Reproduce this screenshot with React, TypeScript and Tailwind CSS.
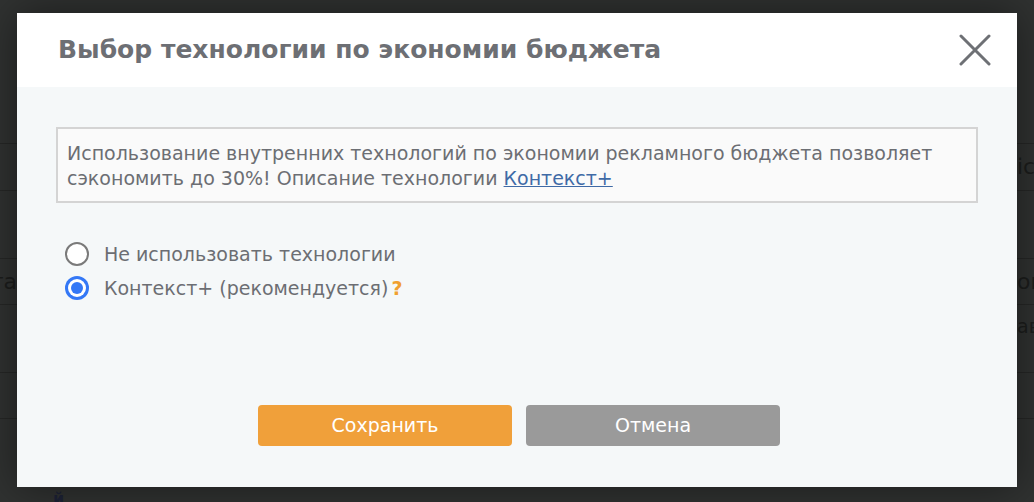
import React, { useState } from 'react';

const font = "font-['DejaVu_Sans',_'Liberation_Sans',_sans-serif]";

const BackgroundPage: React.FC = () => (
  <div className="flex h-full w-full flex-col bg-[#303231] text-[#1c1d1c]">
    <div className="h-[143px] shrink-0" />
    <div className="flex h-[47px] shrink-0 items-center justify-between border-t border-[#262726]">
      <div />
      <div className="w-[17px] overflow-hidden whitespace-nowrap text-[22px] leading-none">іс</div>
    </div>
    <div className="h-[68px] shrink-0 border-t border-[#262726]" />
    <div className="flex h-[46px] shrink-0 items-center justify-between border-t border-[#262726]">
      <div className="flex w-[17px] justify-end overflow-hidden whitespace-nowrap text-[22px] leading-none">та</div>
      <div className="w-[17px] overflow-hidden whitespace-nowrap text-[22px] leading-none">ой</div>
    </div>
    <div className="flex h-[68px] shrink-0 items-start justify-between border-t border-[#262726] pt-[12px]">
      <div />
      <div className="w-[17px] overflow-hidden whitespace-nowrap text-[19px] leading-none">ав</div>
    </div>
    <div className="h-[46px] shrink-0 border-t border-[#262726]" />
    <div className="flex-1 border-t border-[#262726] pl-[53px] pt-[72px] text-[16px] font-bold leading-none text-[#1d2236]">
      й
    </div>
  </div>
);

const Radio: React.FC<{ checked: boolean; onClick: () => void; children: React.ReactNode }> = ({
  checked,
  onClick,
  children,
}) => (
  <label className="flex cursor-pointer items-center gap-[15px]" onClick={onClick}>
    {checked ? (
      <span className="flex h-[24px] w-[24px] items-center justify-center rounded-full bg-[#3478f6]">
        <span className="flex h-[18px] w-[18px] items-center justify-center rounded-full bg-white">
          <span className="h-[12px] w-[12px] rounded-full bg-[#3478f6]" />
        </span>
      </span>
    ) : (
      <span className="h-[24px] w-[24px] rounded-full border-2 border-[#7a7a7a] bg-white" />
    )}
    <span className="text-[19px] leading-[28px] text-[#6c6e73]">{children}</span>
  </label>
);

const App: React.FC = () => {
  const [useTech, setUseTech] = useState(true);

  return (
    <div className={`relative h-[502px] w-[1034px] overflow-hidden ${font}`}>
      <BackgroundPage />

      {/* модальное окно */}
      <div className="absolute left-[17px] top-[13px] flex h-[474px] w-[1000px] flex-col shadow-[0_0_40px_rgba(0,0,0,0.45)]">
        <div className="flex h-[74px] shrink-0 items-center justify-between bg-white pl-[41px] pr-[26px]">
          <h2 className="text-[25px] font-bold text-[#6d6f74]">Выбор технологии по экономии бюджета</h2>
          <button className="flex h-[32px] w-[32px] items-center justify-center text-[#6e7075]">
            <svg width="32" height="32" viewBox="0 0 32 32" fill="none">
              <path d="M2 2L30 30M30 2L2 30" stroke="currentColor" strokeWidth="3" strokeLinecap="round" />
            </svg>
          </button>
        </div>

        <div className="flex flex-1 flex-col bg-[#f5f8f9] px-[39px] pt-[40px]">
          <div className="border-2 border-[#d4d4d4] bg-[#fafafa] px-[9px] pb-[10px] pt-[12px] text-[19px] leading-[25px] text-[#6c6e73]">
            Использование внутренних технологий по экономии рекламного бюджета позволяет сэкономить до 30%!
            Описание технологии{' '}
            <a href="#" className="text-[#3f6aa6] underline">
              Контекст+
            </a>
          </div>

          <div className="ml-[9px] mt-[37px] flex flex-col gap-[6px]">
            <Radio checked={!useTech} onClick={() => setUseTech(false)}>
              Не использовать технологии
            </Radio>
            <Radio checked={useTech} onClick={() => setUseTech(true)}>
              Контекст+ (рекомендуется)
              <span className="ml-[3px] font-bold text-[#f0a030]">?</span>
            </Radio>
          </div>

          <div className="mt-auto flex justify-center gap-[14px] pb-[41px] pl-[4px]">
            <button className="h-[41px] w-[254px] rounded-[4px] bg-[#f0a03a] text-[19px] text-white">Сохранить</button>
            <button className="h-[41px] w-[254px] rounded-[4px] bg-[#9a9a9a] text-[19px] text-white">Отмена</button>
          </div>
        </div>
      </div>
    </div>
  );
};

export default App;
